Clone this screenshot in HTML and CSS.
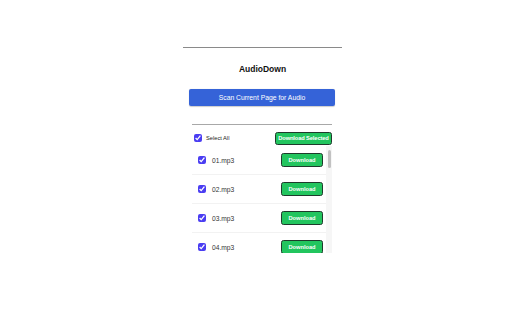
FILE: index.html
```html
<!DOCTYPE html>
<html>
<head>
<meta charset="utf-8">
<link rel="stylesheet" href="styles.css">
</head>
<body>
<div class="popup">
  <h1 class="title">AudioDown</h1>
  <button class="scan">Scan Current Page for Audio</button>
  <hr class="divider">
  <div class="controls">
    <label class="select-all"><input type="checkbox" checked> <span>Select All</span></label>
    <button class="dl dl-selected">Download Selected</button>
  </div>
  <div class="list-wrap">
    <div class="list">
      <div class="row"><label class="item"><input type="checkbox" checked><span>01.mp3</span></label><button class="dl dl-one">Download</button></div>
      <div class="row"><label class="item"><input type="checkbox" checked><span>02.mp3</span></label><button class="dl dl-one">Download</button></div>
      <div class="row"><label class="item"><input type="checkbox" checked><span>03.mp3</span></label><button class="dl dl-one">Download</button></div>
      <div class="row"><label class="item"><input type="checkbox" checked><span>04.mp3</span></label><button class="dl dl-one">Download</button></div>
    </div>
    <div class="scrollbar"><div class="thumb"></div></div>
  </div>
</div>
</body>
</html>
```
FILE: styles.css
```css
html, body {
  margin: 0;
  padding: 0;
  background: #ffffff;
  font-family: "Liberation Sans", Arial, sans-serif;
}
.popup {
  width: 159px;
  margin: 47px 0 0 183px;
  border-top: 1px solid #8a8a8a;
  display: flex;
  flex-direction: column;
}
.title {
  margin: 16px 0 0 0;
  font-size: 8.5px;
  line-height: 10px;
  font-weight: bold;
  color: #111;
  text-align: center;
}
.scan {
  margin: 15px 7px 0 6px;
  height: 17px;
  border: none;
  border-radius: 2px;
  background: #3563d8;
  color: #fff;
  font-family: "Liberation Sans", Arial, sans-serif;
  font-size: 6.8px;
  padding: 0;
  box-shadow: 0 0.5px 1px rgba(0,0,0,0.2);
}
.divider {
  margin: 18px 10px 0 9px;
  border: none;
  border-top: 1px solid #a8a8a8;
  height: 0;
}
.controls {
  margin: 6px 10px 0 11px;
  display: flex;
  align-items: center;
  justify-content: space-between;
  height: 14px;
}
.select-all {
  display: flex;
  align-items: center;
  gap: 4px;
  font-size: 5.7px;
  color: #222;
}
input[type="checkbox"] {
  width: 8px;
  height: 8px;
  margin: 0;
  accent-color: #4a3df2;
}
.dl {
  background: #22c55e;
  color: #fff;
  font-weight: bold;
  font-family: "Liberation Sans", Arial, sans-serif;
  border: 1px solid #1f3a2c;
  border-radius: 2.5px;
  padding: 0;
  font-size: 5.7px;
}
.dl-selected {
  width: 57px;
  height: 13px;
  letter-spacing: -0.1px;
}
.list-wrap {
  margin: 1px 10px 0 9px;
  height: 107px;
  display: flex;
}
.list {
  flex: 1;
  overflow: hidden;
}
.scrollbar {
  width: 6px;
  background: #f6f6f6;
  padding: 4px 1px 0 2px;
  box-sizing: border-box;
}
.thumb {
  height: 18px;
  background: #c2c2c2;
  border-radius: 1.5px;
}
.row {
  height: 29px;
  box-sizing: border-box;
  display: flex;
  align-items: center;
  justify-content: space-between;
  padding: 0 3px 0 6px;
  border-bottom: 1px solid #f2f2f2;
}
.item {
  display: flex;
  align-items: center;
  gap: 6px;
  font-size: 6.7px;
  color: #333;
}
.dl-one {
  width: 42px;
  height: 14px;
}
```
